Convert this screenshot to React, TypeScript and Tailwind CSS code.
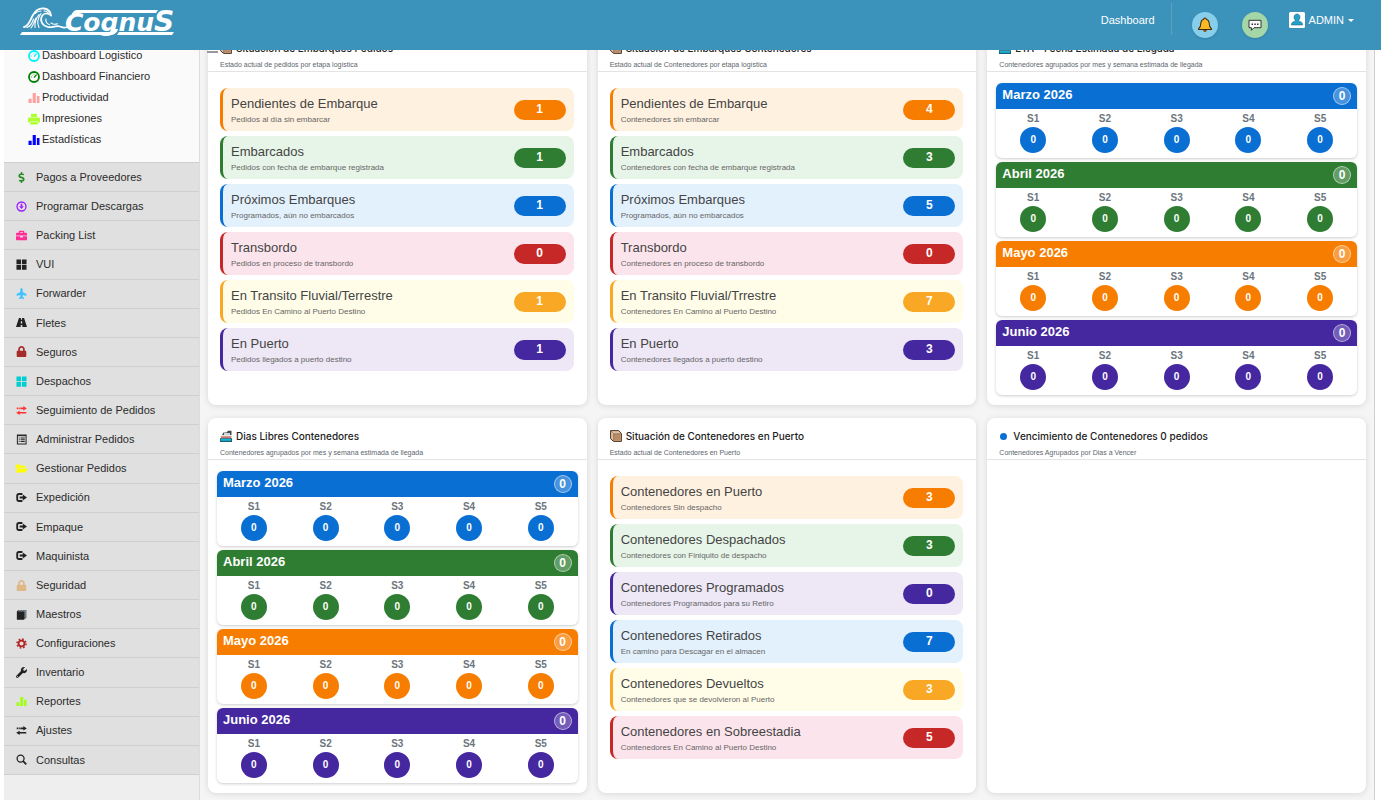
import React from 'react';
import { FaBriefcase, FaDollarSign, FaFolderOpen, FaLock, FaPlane, FaWrench } from 'react-icons/fa';

type Tone = 'orange' | 'green' | 'blue' | 'red' | 'yellow' | 'purple';

interface Stat {
  title: string;
  detail: string;
  value: number;
  tone: Tone;
}

interface IconProps {
  className?: string;
}

const rowTone: Record<Tone, string> = {
  orange: 'border-[#f77d00] bg-[#fff1df]',
  green: 'border-[#2e7d32] bg-[#e7f5e8]',
  blue: 'border-[#0a6fd3] bg-[#e3f1fd]',
  red: 'border-[#c62828] bg-[#fce4ec]',
  yellow: 'border-[#f9a825] bg-[#fffde7]',
  purple: 'border-[#4527a0] bg-[#ede7f6]',
};

const solidTone: Record<Tone, string> = {
  orange: 'bg-[#f77d00]',
  green: 'bg-[#2e7d32]',
  blue: 'bg-[#0a6fd3]',
  red: 'bg-[#c62828]',
  yellow: 'bg-[#f9a825]',
  purple: 'bg-[#4527a0]',
};

const months: { name: string; tone: Tone }[] = [
  { name: 'Marzo 2026', tone: 'blue' },
  { name: 'Abril 2026', tone: 'green' },
  { name: 'Mayo 2026', tone: 'orange' },
  { name: 'Junio 2026', tone: 'purple' },
];

const weeks = ['S1', 'S2', 'S3', 'S4', 'S5'];

const pedidos: Stat[] = [
  { title: 'Pendientes de Embarque', detail: 'Pedidos al día sin embarcar', value: 1, tone: 'orange' },
  { title: 'Embarcados', detail: 'Pedidos con fecha de embarque registrada', value: 1, tone: 'green' },
  { title: 'Próximos Embarques', detail: 'Programados, aún no embarcados', value: 1, tone: 'blue' },
  { title: 'Transbordo', detail: 'Pedidos en proceso de transbordo', value: 0, tone: 'red' },
  { title: 'En Transito Fluvial/Terrestre', detail: 'Pedidos En Camino al Puerto Destino', value: 1, tone: 'yellow' },
  { title: 'En Puerto', detail: 'Pedidos llegados a puerto destino', value: 1, tone: 'purple' },
];

const contenedores: Stat[] = [
  { title: 'Pendientes de Embarque', detail: 'Contenedores sin embarcar', value: 4, tone: 'orange' },
  { title: 'Embarcados', detail: 'Contenedores con fecha de embarque registrada', value: 3, tone: 'green' },
  { title: 'Próximos Embarques', detail: 'Programados, aún no embarcados', value: 5, tone: 'blue' },
  { title: 'Transbordo', detail: 'Contenedores en proceso de transbordo', value: 0, tone: 'red' },
  { title: 'En Transito Fluvial/Trrestre', detail: 'Contenedores En Camino al Puerto Destino', value: 7, tone: 'yellow' },
  { title: 'En Puerto', detail: 'Contenedores llegados a puerto destino', value: 3, tone: 'purple' },
];

const enPuerto: Stat[] = [
  { title: 'Contenedores en Puerto', detail: 'Contenedores Sin despacho', value: 3, tone: 'orange' },
  { title: 'Contenedores Despachados', detail: 'Contenedores con Finiquito de despacho', value: 3, tone: 'green' },
  { title: 'Contenedores Programados', detail: 'Contenedores Programados para su Retiro', value: 0, tone: 'purple' },
  { title: 'Contenedores Retirados', detail: 'En camino para Descagar en el almacen', value: 7, tone: 'blue' },
  { title: 'Contenedores Devueltos', detail: 'Contenedores que se devolvieron al Puerto', value: 3, tone: 'yellow' },
  { title: 'Contenedores en Sobreestadia', detail: 'Contenedores En Camino al Puerto Destino', value: 5, tone: 'red' },
];

const StatsIcon: React.FC<IconProps> = ({ className }) => (
  <svg viewBox="0.5 0.8 11.5 11" fill="currentColor" className={className}>
    <path d="M1 7h3v4H1zM5 1.500h3V11H5zM9 4.500h2.500V11H9z" />
  </svg>
);

const GaugeIcon: React.FC<IconProps> = ({ className }) => (
  <svg viewBox="0 0 12 12" fill="none" stroke="currentColor" className={className}>
    <circle cx="6" cy="6" r="5" strokeWidth="1.8" />
    <path d="M6 6.6 8.6 3.6" strokeWidth="1.3" />
    <path d="M3 6h.9M4 3.8l.6.6M6 2.8v.8" strokeWidth="0.8" />
  </svg>
);

const PrintIcon: React.FC<IconProps> = ({ className }) => (
  <svg viewBox="0 0 12 12" fill="currentColor" className={className}>
    <path d="M3 .8h6V4H3z" />
    <path d="M1.200 4.600h9.600q1.200 0 1.200 1.200v3.700H9.800V8H2.200v1.500H0V5.800q0-1.200 1.200-1.200z" />
    <path d="M2.800 8.600h6.400l.8 2.800H2z" />
  </svg>
);

const GridIcon: React.FC<IconProps> = ({ className }) => (
  <svg viewBox="0 0 12 12" fill="currentColor" className={className}>
    <path d="M.5.600h5v5h-5zM6.500.600h5v5h-5zM.5 6.600h5v5h-5zM6.500 6.600h5v5h-5z" />
  </svg>
);

const RoadIcon: React.FC<IconProps> = ({ className }) => (
  <svg viewBox="0 0 12 12" fill="currentColor" className={className}>
    <path d="M3.200 1h2.200v2h1.200V1h2.200L12 11H6.900V8.600H5.100V11H0zM5.300 4.600 5.200 7h1.600l-.1-2.400z" fillRule="evenodd" />
  </svg>
);

const ListIcon: React.FC<IconProps> = ({ className }) => (
  <svg viewBox="0 0 12 12" fill="none" stroke="currentColor" className={className}>
    <path d="M1.500 1h9.500v10H1.500z" strokeWidth="1.1" />
    <path d="M1.500 1.800H11" strokeWidth="1.2" />
    <path d="M3 4.300h1M3 6.300h1M3 8.300h1M5 4.300h4.600M5 6.300h4.600M5 8.300h4.600" strokeWidth="1.1" />
  </svg>
);

const BookIcon: React.FC<IconProps> = ({ className }) => (
  <svg viewBox="0 0 12 12" fill="currentColor" className={className}>
    <path d="M1 2.500 3 1h6.500v9L8.500 11.500H1z" />
    <path d="M3 1h8.500v8.500L9.300 11.500V3H2z" fill="#77808a" />
    <path d="M1 3h8v8.500H1z" />
  </svg>
);

const GearIcon: React.FC<IconProps> = ({ className }) => (
  <svg viewBox="0 0 12 12" fill="none" stroke="currentColor" className={className}>
    <circle cx="6" cy="6" r="3.200" strokeWidth="1.900" />
    <circle cx="6" cy="6" r="4.900" strokeWidth="1.600" strokeDasharray="1.900 1.950" />
  </svg>
);

const SearchIcon: React.FC<IconProps> = ({ className }) => (
  <svg viewBox="0 0 12 12" fill="none" stroke="currentColor" className={className}>
    <circle cx="5" cy="5" r="3.800" strokeWidth="1.400" />
    <path d="m7.800 7.800 3.400 3.400" strokeWidth="1.900" />
  </svg>
);

const DownloadIcon: React.FC<IconProps> = ({ className }) => (
  <svg viewBox="0 0 12 12" fill="none" stroke="currentColor" className={className}>
    <circle cx="6" cy="6" r="4.9" strokeWidth="1.4" />
    <path d="M6 3v3" strokeWidth="1.8" />
    <path d="M3.4 5.6h5.2L6 8.8z" fill="currentColor" stroke="none" />
  </svg>
);

const TransferIcon: React.FC<IconProps> = ({ className }) => (
  <svg viewBox="0 0 12 12" fill="currentColor" className={className}>
    <path d="M.8 2.800h1.300v1.700H.8zM2.800 2.800h1.300v1.700H2.800zM4.700 2.800H8V1.200l3.800 2.500L8 6V4.500H4.700z" />
    <path d="M11.200 7.700H4V6.200L.2 8.500 4 11V9.400h7.200z" />
  </svg>
);

const LogoutIcon: React.FC<IconProps> = ({ className }) => (
  <svg viewBox="0 0 12 12" fill="currentColor" className={className}>
    <path d="M7 1.200H3.200Q.3 1.200.3 4v4q0 2.800 2.900 2.800H7V8.800H3.400q-1.100 0-1.100-1V4.200q0-1 1.100-1H7z" />
    <path d="M4 4.800h3.400V2.700L12 6 7.400 9.300V7.200H4z" />
  </svg>
);

const PlaneIcon: React.FC<IconProps> = ({ className }) => <FaPlane className={`${className} -rotate-90`} />;

const FolderIcon: React.FC<IconProps> = ({ className }) => <FaFolderOpen className={`${className} scale-110`} />;

const ShipIcon: React.FC<IconProps> = ({ className }) => (
  <svg viewBox="0 0 12 12" className={className}>
    <path d="M2 5 3.500 2.500h3L8 .8h3.500V5z" fill="#3f4a4f" />
    <path d="M4 3.200h6v1.600H4z" fill="#f7f7f7" />
    <path d="M1.500 5h10v1.600H.8z" fill="#e9e9e9" />
    <path d="M.6 6.300h11L11 8.600H1.200z" fill="#c9776b" />
    <path d="M0 8.200h12V12H0z" fill="#1d5f73" />
    <path d="M.8 8.800h10.200v2H.8z" fill="#19b5d6" />
  </svg>
);

const BoxIcon: React.FC<IconProps> = ({ className }) => (
  <svg viewBox="0 0 12 12" className={className}>
    <path d="M.6.6h8.2l2.6 3v7.8H3.6L.6 8.8z" fill="#e3c0a2" stroke="#4a3529" strokeWidth="1" />
    <path d="M3.6 3.8h7.2v7H3.6z" fill="#b98c66" />
    <path d="M.8.8 3.6 3.8h7.6M3.6 3.8v7.4" fill="none" stroke="#6d4c3a" strokeWidth="0.5" />
  </svg>
);

const DotIcon: React.FC<IconProps> = () => (
  <span className="mr-[2px] ml-px block size-[7px] rounded-full bg-[#0a6fd3]" />
);

const submenu = [
  { label: 'Dashboard Logistico', icon: GaugeIcon, color: 'text-[#00f0ff]' },
  { label: 'Dashboard Financiero', icon: GaugeIcon, color: 'text-[#008000]' },
  { label: 'Productividad', icon: StatsIcon, color: 'text-[#ffa0a0]' },
  { label: 'Impresiones', icon: PrintIcon, color: 'text-[#adff2f]' },
  { label: 'Estadísticas', icon: StatsIcon, color: 'text-[#0000ff]' },
];

const menu = [
  { label: 'Pagos a Proveedores', icon: FaDollarSign, color: 'text-[#228b22]' },
  { label: 'Programar Descargas', icon: DownloadIcon, color: 'text-[#9b1cff]' },
  { label: 'Packing List', icon: FaBriefcase, color: 'text-[#ff2e97]' },
  { label: 'VUI', icon: GridIcon, color: 'text-[#222222]' },
  { label: 'Forwarder', icon: PlaneIcon, color: 'text-[#3fc4ff]' },
  { label: 'Fletes', icon: RoadIcon, color: 'text-[#222222]' },
  { label: 'Seguros', icon: FaLock, color: 'text-[#a52a2a]' },
  { label: 'Despachos', icon: GridIcon, color: 'text-[#00ced1]' },
  { label: 'Seguimiento de Pedidos', icon: TransferIcon, color: 'text-[#ff3030]' },
  { label: 'Administrar Pedidos', icon: ListIcon, color: 'text-[#222222]' },
  { label: 'Gestionar Pedidos', icon: FolderIcon, color: 'text-[#ffff00]' },
  { label: 'Expedición', icon: LogoutIcon, color: 'text-[#222222]' },
  { label: 'Empaque', icon: LogoutIcon, color: 'text-[#222222]' },
  { label: 'Maquinista', icon: LogoutIcon, color: 'text-[#222222]' },
  { label: 'Seguridad', icon: FaLock, color: 'text-[#deb887]' },
  { label: 'Maestros', icon: BookIcon, color: 'text-[#222222]' },
  { label: 'Configuraciones', icon: GearIcon, color: 'text-[#b22222]' },
  { label: 'Inventario', icon: FaWrench, color: 'text-[#222222]' },
  { label: 'Reportes', icon: StatsIcon, color: 'text-[#a0ff10]' },
  { label: 'Ajustes', icon: TransferIcon, color: 'text-[#222222]' },
  { label: 'Consultas', icon: SearchIcon, color: 'text-[#222222]' },
];

const Logo = () => (
  <svg viewBox="0 -4 160 40" className="h-10 w-40" fill="#fff">
    <g fill="none" stroke="#fff" strokeLinecap="round">
      <path d="M4 20C9 19 10 13 13 8c2.500-4.500 6-7 11-6.500 4 .5 6.500 3 7 7" strokeWidth="1.800" />
      <path d="M31 8.500C28 5.500 24 6 22 9c-2.500 4.500 0 9.500 6 11 5 1 8-2 12-.5 2.500 1 4 2 7 .5" strokeWidth="1.600" />
      <path d="M7 20.500c4-1.500 5.500-5 6.500-8.500M11 21c2.500-3 3-6 5-10M15 20.500c-.5-4 1-9 4-13M19 20.500c-2-4-1.500-9 2-14" strokeWidth="1.100" />
      <path d="M15 6.500c2-2 4-2.500 6-2.500M24 4c2 0 3.500.8 4.500 2M26 12c-.8 2.500 1 5 3.500 5.500M31 16c2 1.500 4.500 1.500 6.500.8" strokeWidth="1.100" />
    </g>
    <path d="M57 3h81l-2 3H58c-3 0-5 1-7 3 1-3 3-6 6-6z" />
    <path d="M2 25h87c3 0 4-1 5-3h4c-1 4-4 6-8 6H0z" />
    <path d="M99 25h55l-2 3H97z" />
    <text x="45" y="24" fontSize="25" fontWeight="700" fontStyle="italic" fontFamily="'DejaVu Sans', sans-serif">
      Cognu<tspan fontSize="28">S</tspan>
    </text>
  </svg>
);

const BellIcon = () => (
  <svg viewBox="0 0 14 14" className="size-4">
    <path
      d="M7 .9c.8 0 1.1.5 1.1 1C10 2.500 10.700 4 10.700 6c0 2.400.6 3.400 1.900 4.300v.7H1.400v-.7C2.700 9.400 3.300 8.400 3.300 6c0-2 .7-3.500 2.600-4.100 0-.5.300-1 1.100-1z"
      fill="#fbb724"
      stroke="#3b2a12"
      strokeWidth="0.9"
    />
    <path d="M5.300 11.400h3.400c0 2.300-3.400 2.300-3.400 0z" fill="#8a4b12" />
  </svg>
);

const ChatIcon = () => (
  <svg viewBox="0 0 14 14" className="size-[14px]">
    <path d="M1 2.300h12v7.400H6l-2.600 2.600V9.700H1z" fill="#fff" stroke="#333" strokeWidth="1" strokeLinejoin="round" />
    <path d="M3.500 5.500H5V7H3.500zM6.300 5.500h1.500V7H6.300zM9 5.500h1.500V7H9z" fill="#333" />
  </svg>
);

const UserIcon = () => (
  <svg viewBox="0 0 16 16" className="size-4">
    <rect width="16" height="16" rx="1.500" fill="#fff" />
    <path
      d="M8 2c1.800 0 3 1.300 3 3.200 0 1.300-.6 2.300-1.400 3 .2 1 .9 1.200 2.300 1.700 1.300.5 1.600 1.200 1.600 3.100h-11c0-1.900.3-2.600 1.600-3.100 1.400-.5 2.100-.7 2.300-1.700C5.600 7.500 5 6.500 5 5.200 5 3.300 6.200 2 8 2z"
      fill="#1fa3c9"
      stroke="#2b4f66"
      strokeWidth="0.5"
    />
  </svg>
);

const Header = () => (
  <header className="relative z-10 flex h-[50px] items-start justify-between bg-[#3b93bc] pr-[27px] pl-5 text-[11px] text-white">
    <a href="#" aria-label="CognuS" className="mt-[3px] block">
      <Logo />
    </a>
    <div className="flex items-start">
      <a href="#" className="pt-3 leading-4">
        Dashboard
      </a>
      <span className="mt-[3px] mr-5 ml-4 h-8 w-px bg-[#5f9fbf]" />
      <button
        type="button"
        aria-label="Notificaciones"
        className="mt-3 mr-6 flex size-[26px] items-center justify-center rounded-full bg-[#87ceeb] shadow"
      >
        <BellIcon />
      </button>
      <button
        type="button"
        aria-label="Mensajes"
        className="mt-3 mr-[21px] flex size-[26px] items-center justify-center rounded-full bg-[#a5d6a7] shadow"
      >
        <ChatIcon />
      </button>
      <button type="button" className="mt-3 flex items-center gap-1 leading-4">
        <UserIcon />
        ADMIN
        <span className="border-x-[3px] border-t-[3px] border-x-transparent border-t-white" />
      </button>
    </div>
  </header>
);

const Sidebar = () => (
  <aside className="w-[196px] shrink-0 border-r border-[#dcdcdc] bg-[#eeeeee] text-[11px] text-[#2b2b2b]">
    <ul className="bg-[#fafafa] pt-4 pb-3">
      {submenu.map(({ label, icon: Icon, color }) => (
        <li key={label}>
          <a href="#" className="flex h-[21px] items-center gap-[2px] pl-6">
            <Icon className={`size-3 shrink-0 ${color}`} />
            {label}
          </a>
        </li>
      ))}
    </ul>
    <ul className="flex h-[613px] flex-col">
      {menu.map(({ label, icon: Icon, color }) => (
        <li key={label} className="flex-1 border-t border-t-[#cfcfcf] bg-[#e0e0e0] last:border-b last:border-b-[#cfcfcf]">
          <a href="#" className="flex h-full items-center gap-[9px] pl-3">
            <Icon className={`size-[11px] shrink-0 ${color}`} />
            {label}
          </a>
        </li>
      ))}
    </ul>
  </aside>
);

interface PanelProps {
  icon: React.FC<IconProps>;
  title: string;
  subtitle: string;
  children?: React.ReactNode;
}

const Panel: React.FC<PanelProps> = ({ icon: Icon, title, subtitle, children }) => (
  <section className="min-h-[375px] rounded-lg bg-white shadow-[0_1px_6px_rgba(0,0,0,0.12)]">
    <div className="border-b border-[#e3e3e3] px-3 pt-3">
      <h2 className="flex h-3 items-center gap-1 font-[Inter,sans-serif] text-[10px] font-medium text-[#222222]">
        <Icon className="size-3 shrink-0" />
        {title}
      </h2>
      <p className="mt-[5px] text-[7px] leading-3 text-[#5c656d]">{subtitle}</p>
    </div>
    {children}
  </section>
);

const StatList: React.FC<{ items: Stat[] }> = ({ items }) => (
  <ul className="flex flex-col gap-[5px] pt-4 pr-[13px] pl-3">
    {items.map((item) => (
      <li
        key={item.title}
        className={`flex h-[43px] items-center justify-between rounded-lg border-l-[3px] px-2 ${rowTone[item.tone]}`}
      >
        <div className="pt-1">
          <p className="text-[13px] leading-4 text-[#444444]">{item.title}</p>
          <p className="text-[8px] leading-4 text-[#666666]">{item.detail}</p>
        </div>
        <span
          className={`h-5 w-[52px] rounded-full text-center text-xs leading-[18px] font-bold text-white ${solidTone[item.tone]}`}
        >
          {item.value}
        </span>
      </li>
    ))}
  </ul>
);

const MonthList = () => (
  <div className="flex flex-col gap-1 px-[9px] pt-[11px]">
    {months.map((month) => (
      <div key={month.name} className="rounded-md bg-white shadow-[0_1px_3px_rgba(0,0,0,0.2)]">
        <div
          className={`flex h-[26px] items-center justify-between rounded-t-md px-[6px] text-[13px] font-bold text-white ${solidTone[month.tone]}`}
        >
          <h3 className="pb-[2px] leading-4">{month.name}</h3>
          <span className="size-[18px] rounded-full border border-white/50 bg-white/25 text-center text-xs leading-4">
            0
          </span>
        </div>
        <div className="grid h-[49px] grid-cols-5 px-px pt-[3px] text-center text-[10px] font-bold">
          {weeks.map((week) => (
            <div key={week} className="flex flex-col items-center gap-px">
              <span className="leading-[14px] text-[#6c757d]">{week}</span>
              <span className={`size-[26px] rounded-full leading-[26px] text-white ${solidTone[month.tone]}`}>0</span>
            </div>
          ))}
        </div>
      </div>
    ))}
  </div>
);

const App = () => (
  <div className="h-screen overflow-hidden bg-white font-['Liberation_Sans',Arial,sans-serif]">
    <Header />
    <div className="-mt-[21px] flex min-h-full pr-[6px] pl-1">
      <Sidebar />
      <main className="relative grow border-r border-[#d0d0d0] bg-[#f5f5f5] px-2 pt-px">
        <button type="button" aria-label="Menú" className="absolute top-3 left-[7px] flex flex-col gap-[3px]">
          <span className="block h-[2px] w-[11px] bg-[#999999]" />
          <span className="block h-[2px] w-[11px] bg-[#999999]" />
          <span className="block h-[2px] w-[11px] bg-[#999999]" />
        </button>
        <div className="grid grid-cols-3 gap-x-[11px] gap-y-[13px]">
          <Panel icon={BoxIcon} title="Situación de Embarques Pedidos" subtitle="Estado actual de pedidos por etapa logística">
            <StatList items={pedidos} />
          </Panel>
          <Panel
            icon={BoxIcon}
            title="Situación de Embarques Contenedores"
            subtitle="Estado actual de Contenedores por etapa logística"
          >
            <StatList items={contenedores} />
          </Panel>
          <Panel
            icon={ShipIcon}
            title="ETA - Fecha Estimada de Llegada"
            subtitle="Contenedores agrupados por mes y semana estimada de llegada"
          >
            <MonthList />
          </Panel>
          <Panel
            icon={ShipIcon}
            title="Dias Libres Contenedores"
            subtitle="Contenedores agrupados por mes y semana estimada de llegada"
          >
            <MonthList />
          </Panel>
          <Panel icon={BoxIcon} title="Situación de Contenedores en Puerto" subtitle="Estado actual de Contenedores en Puerto">
            <StatList items={enPuerto} />
          </Panel>
          <Panel
            icon={DotIcon}
            title="Vencimiento de Contenedores 0 pedidos"
            subtitle="Contenedores Agrupados por Dias a Vencer"
          />
        </div>
      </main>
    </div>
  </div>
);

export default App;
